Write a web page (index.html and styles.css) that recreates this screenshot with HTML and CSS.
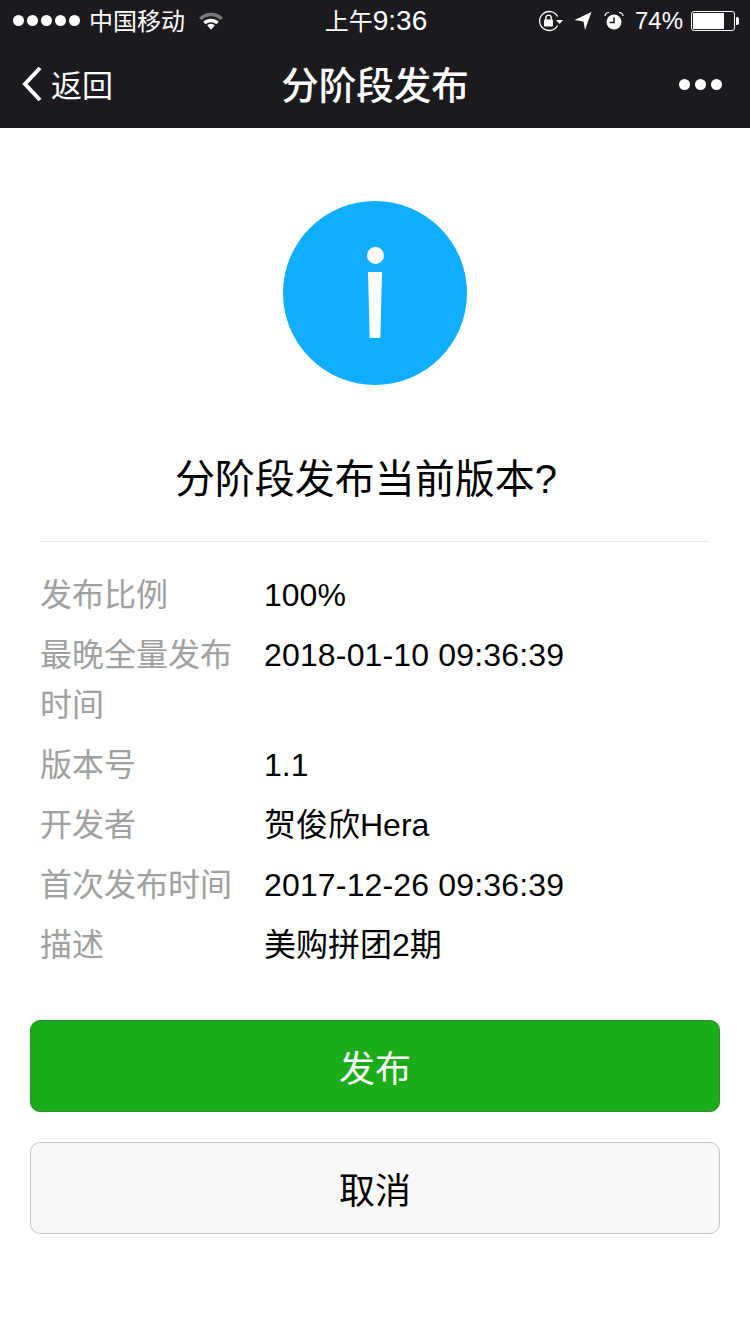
FILE: index.html
```html
<!DOCTYPE html>
<html lang="zh-CN">
<head>
    <meta charset="UTF-8">
    <meta name="viewport" content="width=device-width, initial-scale=1.0">
    <title>分阶段发布</title>
    <link rel="stylesheet" href="styles.css">
</head>
<body>
    <div class="header">
        <!-- ステータスバー -->
        <div class="status">
            <div class="status-left">
                <span class="signal"><i></i><i></i><i></i><i></i><i></i></span>
                <span class="carrier">中国移动</span>
                <svg class="wifi" width="26" height="20" viewBox="0 0 24 18">
                    <path d="M1 6 A15.500 15.500 0 0 1 23 6 L20.800 8.300 A12.300 12.300 0 0 0 3.200 8.300 Z" fill="#77777a"/>
                    <path d="M4.800 9.800 A10.300 10.300 0 0 1 19.200 9.800 L17 12 A7.500 7.500 0 0 0 7 12 Z" fill="#fff"/>
                    <path d="M8.500 13 A5 5 0 0 1 15.500 13 L12 17 Z" fill="#fff"/>
                </svg>
            </div>
            <div class="clock">上午<span class="clock-time">9:36</span></div>
            <div class="status-right">
                <svg class="lock" width="26" height="22" viewBox="0 0 26 22">
                    <path d="M19.500 6.500 A9.500 9.500 0 1 0 19.500 15.500" fill="none" stroke="#fff" stroke-width="1.300"/>
                    <path d="M18 10 L25 10 L21.500 14 Z" fill="#fff"/>
                    <rect x="6" y="9.500" width="9" height="7" rx="1" fill="#fff"/>
                    <path d="M7.800 10 V7.800 A2.700 2.700 0 0 1 13.200 7.800 V10" fill="none" stroke="#fff" stroke-width="1.400"/>
                </svg>
                <svg class="arrow" width="18" height="20" viewBox="0 0 18 20">
                    <path d="M0.500 9 L17.500 1 L11 19 L9.500 10.500 Z" fill="#fff"/>
                </svg>
                <svg class="alarm" width="20" height="20" viewBox="0 0 20 20">
                    <circle cx="10" cy="11" r="7.500" fill="#fff"/>
                    <path d="M10 6.500 V11.500 H5.500" fill="none" stroke="#1c1a1f" stroke-width="1.600"/>
                    <path d="M1 5 A4 4 0 0 1 5 1.500 M15 1.500 A4 4 0 0 1 19 5" fill="none" stroke="#fff" stroke-width="1.200"/>
                </svg>
                <span class="percent">74%</span>
                <span class="battery"><b></b></span>
                <span class="battery-tip"></span>
            </div>
        </div>

        <!-- ナビ -->
        <div class="nav">
            <div class="back">
                <svg width="22" height="36" viewBox="0 0 22 36">
                    <path d="M19 2 L4 18 L19 34" fill="none" stroke="#fff" stroke-width="4"/>
                </svg>
                <span class="back-text">返回</span>
            </div>
            <div class="nav-title">分阶段发布</div>
            <div class="more"><i></i><i></i><i></i></div>
        </div>
    </div>

    <div class="content">
        <div class="info-icon"><i class="dot"></i><i class="bar"></i></div>
        <h1 class="title">分阶段发布当前版本?</h1>

        <div class="list">
            <div class="row"><div class="label">发布比例</div><div class="value">100%</div></div>
            <div class="row"><div class="label">最晚全量发布时间</div><div class="value date">2018-01-10 09:36:39</div></div>
            <div class="row"><div class="label">版本号</div><div class="value">1.1</div></div>
            <div class="row"><div class="label">开发者</div><div class="value">贺俊欣Hera</div></div>
            <div class="row"><div class="label">首次发布时间</div><div class="value date">2017-12-26 09:36:39</div></div>
            <div class="row"><div class="label">描述</div><div class="value">美购拼团2期</div></div>
        </div>

        <div class="btn btn-primary">发布</div>
        <div class="btn btn-default">取消</div>
    </div>
</body>
</html>
```

FILE: styles.css
```css
* {
    box-sizing: border-box;
}

body {
    margin: 0;
    background: #fff;
    color: #000;
    font-family: "Liberation Sans", "Noto Sans CJK SC", sans-serif;
}

.header {
    height: 128px;
    background: #1c1a1f;
    color: #fff;
}

.status {
    height: 42px;
    padding: 0 11px 0 13px;
    display: flex;
    align-items: center;
    justify-content: space-between;
    font-size: 25px;
}

.status-left,
.status-right {
    width: 300px;
    display: flex;
    align-items: center;
}

.status-right {
    justify-content: flex-end;
}

.signal {
    display: flex;
    gap: 3px;
    margin-bottom: 2px;
}

.signal i {
    width: 11px;
    height: 11px;
    border-radius: 50%;
    background: #fff;
}

.carrier {
    margin-left: 9px;
    margin-bottom: 4px;
    font-size: 24px;
}

.wifi {
    margin-left: 13px;
    margin-bottom: 1px;
}

.clock {
    font-size: 24px;
    margin-bottom: 4px;
}

.clock-time {
    font-size: 28px;
}

.lock {
    margin-right: 10px;
}

.arrow {
    margin-right: 12px;
}

.alarm {
    margin-right: 11px;
}

.percent {
    font-size: 24px;
    margin-right: 8px;
}

.battery {
    width: 44px;
    height: 20px;
    border: 1.500px solid #fff;
    border-radius: 3px;
    padding: 1px;
    display: flex;
}

.battery b {
    width: 31px;
    background: #fff;
}

.battery-tip {
    width: 3px;
    height: 8px;
    margin-left: 1px;
    background: #fff;
    border-radius: 0 2px 2px 0;
}

.nav {
    height: 86px;
    padding: 0 28px 2px 21px;
    display: flex;
    align-items: center;
    justify-content: space-between;
    position: relative;
}

.back {
    display: flex;
    align-items: center;
    gap: 8px;
    font-size: 31px;
}

.back-text {
    margin-bottom: 1px;
}

.nav-title {
    position: absolute;
    left: 0;
    right: 0;
    margin-bottom: 4px;
    text-align: center;
    font-size: 37.500px;
    font-weight: 500;
}

.more {
    display: flex;
    gap: 5px;
}

.more i {
    width: 11px;
    height: 11px;
    border-radius: 50%;
    background: #fff;
}

.content {
    padding: 73px 30px 0;
}

.info-icon {
    width: 184px;
    height: 184px;
    margin: 0 auto;
    padding-top: 46px;
    border-radius: 50%;
    background: #10aeff;
    display: flex;
    flex-direction: column;
    align-items: center;
}

.dot {
    width: 17px;
    height: 17px;
    border-radius: 50%;
    background: #fff;
}

.bar {
    width: 14px;
    height: 66px;
    margin-top: 8px;
    background: #fff;
    clip-path: polygon(0 0, 100% 0, 88% 100%, 12% 100%);
}

.title {
    margin: 69px 0 0;
    padding-right: 18px;
    font-size: 40px;
    line-height: 50px;
    font-weight: 400;
    text-align: center;
}

.list {
    margin: 37px 11px 0 10px;
    padding-top: 28px;
    border-top: 1px solid #e5e5e5;
}

.row {
    display: flex;
    margin-bottom: 10px;
    font-size: 32px;
    line-height: 50px;
}

.label {
    width: 192px;
    color: #a0a0a0;
    flex-shrink: 0;
}

.value {
    margin-left: 32px;
    color: #000;
}

.date {
    letter-spacing: 0.16px;
}

.btn {
    height: 92px;
    border-radius: 10px;
    font-size: 36px;
    display: flex;
    align-items: center;
    justify-content: center;
}

.btn-primary {
    margin-top: 50px;
    background: #1aad19;
    border: 1px solid #2a8a2a;
    color: #fff;
}

.btn-default {
    margin-top: 30px;
    background: #f8f8f8;
    border: 1px solid #c8c8c8;
}
```
